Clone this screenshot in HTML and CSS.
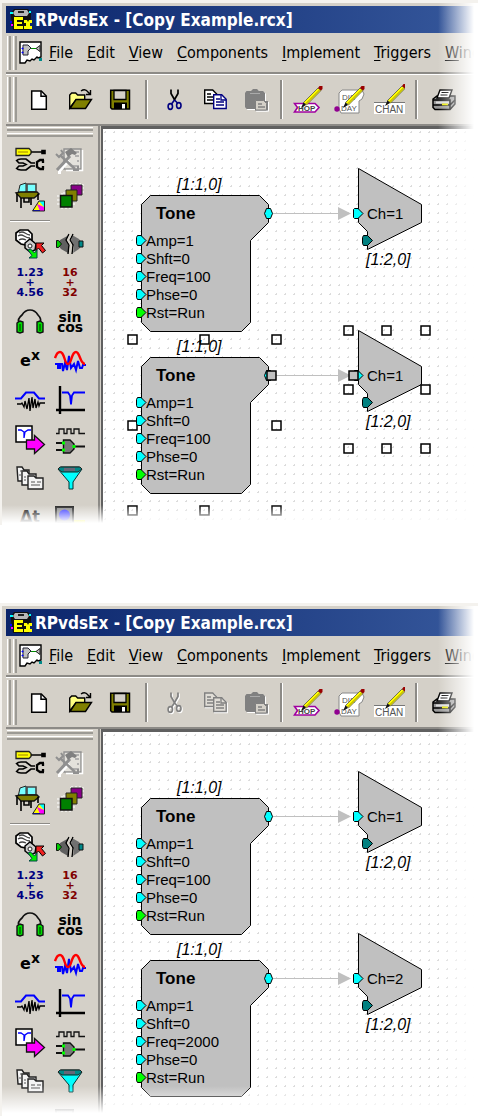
FILE: index.html
```html
<!DOCTYPE html>
<html lang="en">
<head>
    <meta charset="UTF-8">
    <meta name="viewport" content="width=device-width, initial-scale=1.0">
    <title>RPvdsEx - Copy Example</title>
    <link rel="stylesheet" href="styles.css">
</head>
<body>
    <!-- shared icons and circuit parts -->
    <svg class="sprite" aria-hidden="true">
        <symbol id="app" viewBox="0 0 24 24">
            <path d="M5 1h14l3 4v5l-2 12H4L2 9V5z" fill="#111"/>
            <path d="M6 2h12l2 3-2 3H6L4 5z" fill="#b8b8b8"/>
            <path d="M9 3h6v2H9z" fill="#222"/>
            <path d="M1 4h3v2H1zM20 3h2v2h-2z" fill="#0ff"/>
            <path d="M1 13h2v2H1z" fill="#00f"/><path d="M2 16h2v2H2z" fill="#f0f"/>
            <path d="M5 9h9v3H8v2h5v2H8v2h6v3H5zM15 12h3l1 2 1-2h3v3h-2v3h2v3h-8v-3h2v-3h-2z" fill="#ff0"/>
        </symbol>
        <symbol id="doc" viewBox="0 0 24 24">
            <path d="M1 1h21v15l-3 1-1-1-3 3-2-1-2 2-3-1-2 3-5 0z" fill="#fff" stroke="#000" stroke-width="1.4"/>
            <path d="M4 4h5l3 3-3 3v4H4z" fill="#c0c0c0" stroke="#223"/>
            <path d="M12 7.500h5" stroke="#080"/><path d="M21 4.500v6l-4-3z" fill="#c0c0c0" stroke="#222"/>
            <path d="M3 7h1v1H3zM3 11h1v1H3z" stroke="#00f" fill="none"/>
            <path d="M20 17h3v3h-3z" fill="#088"/>
        </symbol>
        <symbol id="new" viewBox="0 0 32 32">
            <path d="M8.700 7h9.600l5 5v13.300H8.700z" fill="#fff" stroke="#000" stroke-width="1.500"/>
            <path d="M18 7v5.300h5" fill="none" stroke="#000" stroke-width="1.500"/>
        </symbol>
        <symbol id="open" viewBox="0 0 32 32">
            <path d="M6.700 24V11l2-2h4l2 2h7v5H13z" fill="#ffff80" stroke="#000" stroke-width="1.400"/>
            <path d="M7 24.500l6-9h15.500l-6 9z" fill="#808000" stroke="#000" stroke-width="1.400"/>
            <path d="M18 7q4-3 7 1l2 2M27.500 6v4.500H23" fill="none" stroke="#000" stroke-width="1.400"/>
        </symbol>
        <symbol id="save" viewBox="0 0 32 32">
            <path d="M7.700 6.200h18.800v18.800H9l-1.300-1.300z" fill="#808000" stroke="#000" stroke-width="1.500"/>
            <path d="M11 6.500h12v9H11z" fill="#d4d0c8" stroke="#000" stroke-width="1.300"/>
            <path d="M11 18.500h13v6.500H11z" fill="#000"/><path d="M19 20h3v4.500h-3z" fill="#fff"/>
        </symbol>
        <symbol id="cut" viewBox="0 0 32 32">
            <path d="M13 5.500v4l4 7M20 5.500v4l-4 7" fill="none" stroke="var(--ink)" stroke-width="1.700"/>
            <g fill="none" stroke="var(--blue)" stroke-width="1.600">
                <path d="M16.500 16l-3 4M16.500 16l3 3"/>
                <ellipse cx="12.300" cy="22.500" rx="2.200" ry="2.900"/><ellipse cx="20.800" cy="21.500" rx="2.200" ry="2.900"/>
            </g>
        </symbol>
        <symbol id="copy" viewBox="0 0 32 32">
            <path d="M6.700 6h8l4 4v9.500h-12z" fill="var(--paper)" stroke="var(--ink)" stroke-width="1.400"/>
            <path d="M9 10h4M9 13h7M9 16h7" stroke="var(--ink)" stroke-width="1.300"/>
            <path d="M15.700 10.700h8l4.500 4.500v9.300H15.700z" fill="var(--paper)" stroke="var(--blue)" stroke-width="1.400"/>
            <path d="M18 15h4M18 18h8M18 21h8M23 11v5h5" fill="none" stroke="var(--blue)" stroke-width="1.300"/>
        </symbol>
        <symbol id="paste" viewBox="0 0 32 32">
            <path d="M7 9l1.500-2H13l2-2h4l2 2h4l2 2v8h3v9.500H17V25H8.500L7 23z" fill="#808080"/>
            <path d="M12 9.500h10" stroke="#aaa"/>
            <path d="M17.500 16.500h8l3 3v6.500h-11z" fill="#d4d0c8" stroke="#808080"/>
            <path d="M20 20h4M20 23h7" stroke="#808080" stroke-width="1.400"/>
        </symbol>
        <symbol id="pencil" viewBox="0 0 32 32">
            <path d="M10.500 18.500L25 4l3 2.500L13.500 21z" fill="#ff0" stroke="#554" stroke-width=".8"/>
            <path d="M12.500 20L26.500 6" stroke="#a09000"/>
            <path d="M25 4l1.500-2h3v3L28 6.500z" fill="#900"/>
            <path d="M8 24l2.500-5.500L13 21z" fill="#111"/>
        </symbol>
        <symbol id="hop" viewBox="0 0 32 32">
            <path d="M1.500 19.500H22l4 4-4 4.500H1.500l3-4.500z" fill="#fff" stroke="#a000a0" stroke-width="1.600"/>
            <text x="5" y="27" font-size="8" font-weight="bold" fill="#444">HOP</text>
            <use href="#pencil"/>
        </symbol>
        <symbol id="disday" viewBox="0 0 32 32">
            <path d="M6 9l3-3h20l2 4-2 5-3 2v12H8l-2-4z" fill="#fff" stroke="#888"/>
            <text x="9" y="16" font-size="8" fill="#555">DIS</text>
            <text x="8" y="27" font-size="8" fill="#555">DAY</text>
            <circle cx="4" cy="25" r="2.700" fill="#900090"/>
            <use href="#pencil" x="2"/>
        </symbol>
        <symbol id="chan" viewBox="0 0 32 32">
            <path d="M1 19h31v11H1z" fill="#fff"/><path d="M1 18.500h31" stroke="#777"/>
            <text x="2" y="28.500" font-size="10" fill="#555">CHAN</text>
            <use href="#pencil" x="4" y="-2"/>
        </symbol>
        <symbol id="print" viewBox="0 0 32 32">
            <path d="M5 15l4-3h18v8l-5 5.500H7l-2-2z" fill="#999" stroke="#000" stroke-width="1.500"/>
            <path d="M9 14l3-8h12l-3 8z" fill="#fff" stroke="#000" stroke-width="1.400"/>
            <path d="M13.500 8.500h7M12.500 11h7" stroke="#000"/>
            <path d="M5 16h17v9M5 21h17l5-5" fill="none" stroke="#000" stroke-width="1.500"/>
            <path d="M8 17.500h13v2H8z" fill="#ddd"/><path d="M14 19.500h6v1.800h-6z" fill="#ee0"/>
        </symbol>

        <symbol id="tools" viewBox="0 0 32 32">
            <path d="M2 5.500h13l2 2v3l-2 2H2z" fill="#ff0" stroke="#222" stroke-width="1.300"/>
            <path d="M4 9h10" stroke="#a08000"/><path d="M17 9h13M28 7.500v3h3v-3z" stroke="#000" stroke-width="1.600" fill="#000"/>
            <path d="M2 18q2-2 5-2h5l5 4h4M2 25q2 2 5 2h5l5-4h4M3 18l2 2h4l3 1.500-3 1.500H5l-2 2" fill="none" stroke="#000" stroke-width="1.700"/>
            <path d="M30 17h-4l-3 2v5l3 2h4M29 17v3M29 26v-3" fill="none" stroke="#000" stroke-width="2.300"/>
        </symbol>
        <symbol id="build" viewBox="0 0 32 32">
            <path d="M10 6h17v20H10z" fill="#e4e2dc" stroke="#909090" stroke-width="1.400"/>
            <path d="M28.500 7v20.500H12" fill="none" stroke="#fff" stroke-width="1.500"/>
            <path d="M19 9h6M21 13h4M19 23h6M23 18h2" stroke="#a0a0a0" stroke-width="1.400"/>
            <path d="M5 28.500l10-11M4 29.500h3" stroke="#fff" stroke-width="3"/>
            <path d="M3 27l13-14" stroke="#909090" stroke-width="3"/>
            <path d="M11 9l6-4 6 5-2 2-3-1-4 3z" fill="#808080"/>
            <path d="M6 12l15 14" stroke="#909090" stroke-width="2.400"/>
            <path d="M2 11l3 3 4-4-2-3M19 27h5v-4" fill="none" stroke="#909090" stroke-width="2"/>
        </symbol>
        <symbol id="desk" viewBox="0 0 32 32">
            <path d="M6 3l6-2v9l-8 2z" fill="#7ff" stroke="#222"/>
            <path d="M13 2h9v8h-9z" fill="#7ff" stroke="#444" stroke-width="1.600"/>
            <path d="M2 11l4-1h17l2 2-5 4H7z" fill="#808000" stroke="#111" stroke-width="1.400"/>
            <path d="M3 12v8M7 16v10M17 16v7M24 12v6M10 16v4h5v-4" stroke="#000" stroke-width="1.600" fill="none"/>
            <path d="M19 28l6-9h5v10H19z" fill="#ff0"/><path d="M25 19h5v6z" fill="#0ff"/>
            <path d="M23 22l7 3v4h-4z" fill="#f0f"/><path d="M19 28h7v1h-7z" fill="#00f"/>
            <path d="M18.500 29l6.500-10h5.500v10z" fill="none" stroke="#222"/>
        </symbol>
        <symbol id="chips" viewBox="0 0 32 32">
            <path d="M16 3h14M16 6h14M16 10h14M18 1v11M22 1v11M26 1v11M9 11h14M9 16h14M3 14h18M3 18h18M3 22h18M8 11v16M12 11v16M16 11v16" stroke="#fff" stroke-width="1.200"/>
            <path d="M17 3h11v10H17z" fill="#808" stroke="#222"/>
            <path d="M12 8h11v11H12z" fill="#808000" stroke="#222"/>
            <path d="M6.500 13.500h11.500v11.500H6.500z" fill="#008000" stroke="#111" stroke-width="1.500"/>
        </symbol>
        <symbol id="jack" viewBox="0 0 32 32">
            <path d="M2 5l4-3h8l4 4v6l-6 5-5-1-5-4z" fill="#fff" stroke="#000" stroke-width="1.700"/>
            <path d="M5 5q3-2 6 0t5 2M4 8q3-2 6 0t6 2M5 12q3-2 7 0" fill="none" stroke="#444" stroke-width="1.300"/>
            <path d="M11 15l5-4 6 5-1 6-5 2-5-4z" fill="#ccc" stroke="#000" stroke-width="1.500"/>
            <circle cx="16" cy="18" r="2" fill="#fff" stroke="#222"/>
            <path d="M22 15h8l-2.500 2.500 4 5-3 2.500-4-5-2.500 2.500z" fill="#f02020" stroke="#000"/>
            <path d="M14 22l2.500-1 4 4L23 22v8h-8l3-2.500z" fill="#0e0" stroke="#044"/>
        </symbol>
        <symbol id="split" viewBox="0 0 32 32">
            <path d="M3 16l3-4 9-5-2 6 2 6-1 6-7-4z" fill="#606060"/>
            <path d="M18 7l7 4 4 5-4 5-6 4 1-6-3-6z" fill="#707070"/>
            <path d="M15 6l-3 6 3 5-1 9M19 6l-3 6 3 5-1 9" fill="none" stroke="#000" stroke-width="1.400"/>
            <path d="M17 6l-3 6 3 5-1 9" fill="none" stroke="#d4d0c8" stroke-width="2"/>
            <path d="M2.500 12.500h2l3 3.500-3 3.500h-2z" fill="#0c0" stroke="#111"/>
            <path d="M25 13h4v6h-4z" fill="#088" stroke="#111"/>
        </symbol>
        <symbol id="phones" viewBox="0 0 32 32">
            <path d="M5 17q-2-4 3-8 3-5 8-5t8 5q4 4 2 8" fill="none" stroke="#111" stroke-width="1.700"/>
            <path d="M3 17l3-2 3 1v10l-3 1-3-1zM29 17l-3-2-3 1v10l3 1 3-1z" fill="#0d0" stroke="#111" stroke-width="1.400"/>
            <path d="M6 18v7M26 18v7" stroke="#060" stroke-width="1.500"/>
        </symbol>
        <symbol id="waves" viewBox="0 0 32 32">
            <path d="M1 19h3v4h2v-4h2l1 7 2-8 2 7 2-14 2 12 3-4 2 6 2-9 2 7h2l1-3h4" fill="none" stroke="#00f" stroke-width="2"/>
            <path d="M1 13q2-6 5-6c5 0 4 12 8 12 4 0 3-12 8-12 4 0 4 12 9 12" fill="none" stroke="#f00" stroke-width="2.400"/>
        </symbol>
        <symbol id="bump" viewBox="0 0 32 32">
            <path d="M1 14.500h6l5-6h8l5 6h6" fill="none" stroke="#00f" stroke-width="2"/>
            <path d="M3 20h4l1-1 2 4 1-6 2 8 2-11 1 13 2-14 1 11 2-9 1 9 2-6 1 4 1-3h5" fill="none" stroke="#000" stroke-width="1.300"/>
        </symbol>
        <symbol id="notch" viewBox="0 0 32 32">
            <path d="M6 2v28M2 26h29" stroke="#000" stroke-width="2.400"/>
            <path d="M8 8.500h6l2 3 1 9 1-9 2-3h11" fill="none" stroke="#00f" stroke-width="1.800"/>
        </symbol>
        <symbol id="export" viewBox="0 0 32 32">
            <path d="M2 3h16v16H2z" fill="#fff" stroke="#000" stroke-width="1.500"/>
            <path d="M4 7h3l3 2v6l1-6 3-2h3" fill="none" stroke="#00f" stroke-width="1.300"/>
            <path d="M12.500 17h8v-4.500l10 9-10 9V26h-8z" fill="#f0f" stroke="#111" stroke-width="1.300"/>
        </symbol>
        <symbol id="gate" viewBox="0 0 32 32">
            <path d="M2 10.500h3V6h5v4.500h3V6h4v4.500h3V6h5v4.500h6" fill="none" stroke="#111" stroke-width="1.300"/>
            <path d="M2 20h8M2 27h8M20 23.500h11" stroke="#111" stroke-width="1.800"/>
            <path d="M9.500 17H16l4 4v5l-4 4H9.500z" fill="#777" stroke="#111" stroke-width="1.400"/>
            <path d="M8 18.500h3v3H8zM8 25.500h3v3H8zM18.500 22h3v3h-3z" fill="#0f0"/>
        </symbol>
        <symbol id="pages" viewBox="0 0 32 32">
            <g fill="#f4f4f4" stroke="#222" stroke-width="1.400">
                <path d="M3 5h5l2 3h5v11H4z"/><path d="M8 9h5l2 3h7v11H8z"/><path d="M14 14h6l2 2h7v11H14z"/>
            </g>
            <path d="M17 20h4M23 20h4M17 23h9M6 9h3M10 15h2M10 18h2M5 13h2" stroke="#555"/>
        </symbol>
        <symbol id="funnel" viewBox="0 0 32 32">
            <path d="M4 7l3-2h18l3 2-9 13v7h-4v-7z" fill="#0ff" stroke="#033"/>
            <path d="M4 7l2-2h20l2 2-4 3H8z" fill="#088" stroke="#222"/>
            <path d="M10 6h11v3H10z" fill="#667"/>
        </symbol>
        <symbol id="blue" viewBox="0 0 32 32">
            <path d="M2 6h17v16H2z" fill="#888" stroke="#222" stroke-width="2"/>
            <circle cx="10.500" cy="14" r="5.500" fill="#33f"/>
            <path d="M20 19h11v8H20z" fill="#ee0"/>
        </symbol>

        <symbol id="tone" overflow="visible">
            <path class="part" d="M9.500.5h109l9 9v18l-18 18v82l-9 9h-91l-9-9V9.500z"/>
            <g class="port">
                <path d="M123.500 18.500l2-5h4l2 5-2 5h-4z"/>
                <path d="M-3.500 40.500H0l5 5-5 5h-3.500l-1-2v-6z"/>
                <path d="M-3.500 58.500H0l5 5-5 5h-3.500l-1-2v-6z"/>
                <path d="M-3.500 76.500H0l5 5-5 5h-3.500l-1-2v-6z"/>
                <path d="M-3.500 94.500H0l5 5-5 5h-3.500l-1-2v-6z"/>
                <path class="run" d="M-3.500 112.500H0l5 5-5 5h-3.500l-1-2v-6z"/>
            </g>
        </symbol>
        <symbol id="out" overflow="visible">
            <path class="wire" d="M-85 45.500h66"/>
            <path class="tip" d="M-20 39v13l13-6.500z"/>
            <path class="part" d="M.5.500l63 36v18l-54 27v-18l-9-9z"/>
            <g class="port">
                <path d="M-4.500 41.500l1-1H0l5 5-5 5h-3.500l-1-1z"/>
                <path class="idle" d="M5.500 67.500h4l5 5-5 5h-4l-1-2v-6z"/>
            </g>
        </symbol>
    </svg>

    <section class="window before">
        <header class="titlebar">
            <svg class="badge"><use href="#app"/></svg>
            <h1>RPvdsEx - [Copy Example.rcx]</h1>
        </header>
        <nav class="menubar">
            <span class="grip"></span>
            <svg class="badge"><use href="#doc"/></svg>
            <button><u>F</u>ile</button>
            <button><u>E</u>dit</button>
            <button><u>V</u>iew</button>
            <button><u>C</u>omponents</button>
            <button><u>I</u>mplement</button>
            <button><u>T</u>riggers</button>
            <button><u>W</u>indow</button>
        </nav>
        <div class="toolbar">
            <span class="grip"></span>
            <button class="tool" aria-label="New"><svg><use href="#new"/></svg></button>
            <button class="tool" aria-label="Open"><svg><use href="#open"/></svg></button>
            <button class="tool" aria-label="Save"><svg><use href="#save"/></svg></button>
            <span class="divider"></span>
            <button class="tool" aria-label="Cut"><svg><use href="#cut"/></svg></button>
            <button class="tool" aria-label="Copy"><svg><use href="#copy"/></svg></button>
            <button class="tool" aria-label="Paste" disabled><svg><use href="#paste"/></svg></button>
            <span class="divider"></span>
            <button class="tool" aria-label="Edit hops"><svg><use href="#hop"/></svg></button>
            <button class="tool" aria-label="Edit display"><svg><use href="#disday"/></svg></button>
            <button class="tool" aria-label="Edit channels"><svg><use href="#chan"/></svg></button>
            <span class="divider"></span>
            <button class="tool" aria-label="Print"><svg><use href="#print"/></svg></button>
        </div>
        <div class="workspace">
            <aside class="toolbox">
                <span class="grip"></span>
                <div class="palette">
                    <button class="tool" aria-label="Setup"><svg><use href="#tools"/></svg></button>
                    <button class="tool" aria-label="Build"><svg><use href="#build"/></svg></button>
                    <button class="tool" aria-label="Desk"><svg><use href="#desk"/></svg></button>
                    <button class="tool" aria-label="Devices"><svg><use href="#chips"/></svg></button>
                    <hr>
                    <button class="tool" aria-label="Input and output"><svg><use href="#jack"/></svg></button>
                    <button class="tool" aria-label="Helpers"><svg><use href="#split"/></svg></button>
                    <button class="tool sum navy">1.23<br>+<br>4.56</button>
                    <button class="tool sum maroon">16<br>+<br>32</button>
                    <button class="tool" aria-label="Audio"><svg><use href="#phones"/></svg></button>
                    <button class="tool trig">sin<br>cos</button>
                    <button class="tool exp">e<sup>x</sup></button>
                    <button class="tool" aria-label="Waveforms"><svg><use href="#waves"/></svg></button>
                    <button class="tool" aria-label="Envelopes"><svg><use href="#bump"/></svg></button>
                    <button class="tool" aria-label="Filters"><svg><use href="#notch"/></svg></button>
                    <button class="tool" aria-label="Export"><svg><use href="#export"/></svg></button>
                    <button class="tool" aria-label="Logic"><svg><use href="#gate"/></svg></button>
                    <button class="tool" aria-label="Buffers"><svg><use href="#pages"/></svg></button>
                    <button class="tool" aria-label="Reduce"><svg><use href="#funnel"/></svg></button>
                    <button class="tool delay">&Delta;t</button>
                    <button class="tool" aria-label="Devices status"><svg><use href="#blue"/></svg></button>
                </div>
            </aside>
            <main class="canvas">
                <svg class="circuit">
                    <g transform="translate(38 66)">
                        <use href="#tone"/>
                        <text class="label" x="36" y="-5">[1:1,0]</text>
                        <text class="name" x="15" y="24">Tone</text>
                        <text x="5" y="51">Amp=1</text>
                        <text x="5" y="69">Shft=0</text>
                        <text x="5" y="87">Freq=100</text>
                        <text x="5" y="105">Phse=0</text>
                        <text x="5" y="123">Rst=Run</text>
                    </g>
                    <g transform="translate(255 39)">
                        <use href="#out"/>
                        <text x="9" y="51">Ch=1</text>
                        <text class="label" x="8" y="97">[1:2,0]</text>
                    </g>
                    <g class="handles">
                        <path d="M25 206h9v9h-9zM97 206h9v9h-9zM169 206h9v9h-9zM25 292h9v9h-9zM169 292h9v9h-9zM25 377h9v9h-9zM97 377h9v9h-9zM169 377h9v9h-9z"/>
                    </g>
                    <g transform="translate(38 228)">
                        <use href="#tone"/>
                        <text class="label" x="36" y="-5">[1:1,0]</text>
                        <text class="name" x="15" y="24">Tone</text>
                        <text x="5" y="51">Amp=1</text>
                        <text x="5" y="69">Shft=0</text>
                        <text x="5" y="87">Freq=100</text>
                        <text x="5" y="105">Phse=0</text>
                        <text x="5" y="123">Rst=Run</text>
                    </g>
                    <g transform="translate(255 201)">
                        <use href="#out"/>
                        <text x="9" y="51">Ch=1</text>
                        <text class="label" x="8" y="97">[1:2,0]</text>
                    </g>
                    <g class="handles">
                        <path d="M241 197h9v9h-9zM279 197h9v9h-9zM318 197h9v9h-9zM241 256h9v9h-9zM318 256h9v9h-9zM241 315h9v9h-9zM279 315h9v9h-9zM318 315h9v9h-9z"/>
                        <path class="joint" d="M164 242h9v9h-9zM246 242h9v9h-9z"/>
                    </g>
                </svg>
            </main>
        </div>
    </section>

    <section class="window after">
        <header class="titlebar">
            <svg class="badge"><use href="#app"/></svg>
            <h1>RPvdsEx - [Copy Example.rcx]</h1>
        </header>
        <nav class="menubar">
            <span class="grip"></span>
            <svg class="badge"><use href="#doc"/></svg>
            <button><u>F</u>ile</button>
            <button><u>E</u>dit</button>
            <button><u>V</u>iew</button>
            <button><u>C</u>omponents</button>
            <button><u>I</u>mplement</button>
            <button><u>T</u>riggers</button>
            <button><u>W</u>indow</button>
        </nav>
        <div class="toolbar">
            <span class="grip"></span>
            <button class="tool" aria-label="New"><svg><use href="#new"/></svg></button>
            <button class="tool" aria-label="Open"><svg><use href="#open"/></svg></button>
            <button class="tool" aria-label="Save"><svg><use href="#save"/></svg></button>
            <span class="divider"></span>
            <button class="tool" aria-label="Cut" disabled><svg><use href="#cut"/></svg></button>
            <button class="tool" aria-label="Copy" disabled><svg><use href="#copy"/></svg></button>
            <button class="tool" aria-label="Paste" disabled><svg><use href="#paste"/></svg></button>
            <span class="divider"></span>
            <button class="tool" aria-label="Edit hops"><svg><use href="#hop"/></svg></button>
            <button class="tool" aria-label="Edit display"><svg><use href="#disday"/></svg></button>
            <button class="tool" aria-label="Edit channels"><svg><use href="#chan"/></svg></button>
            <span class="divider"></span>
            <button class="tool" aria-label="Print"><svg><use href="#print"/></svg></button>
        </div>
        <div class="workspace">
            <aside class="toolbox">
                <span class="grip"></span>
                <div class="palette">
                    <button class="tool" aria-label="Setup"><svg><use href="#tools"/></svg></button>
                    <button class="tool" aria-label="Build"><svg><use href="#build"/></svg></button>
                    <button class="tool" aria-label="Desk"><svg><use href="#desk"/></svg></button>
                    <button class="tool" aria-label="Devices"><svg><use href="#chips"/></svg></button>
                    <hr>
                    <button class="tool" aria-label="Input and output"><svg><use href="#jack"/></svg></button>
                    <button class="tool" aria-label="Helpers"><svg><use href="#split"/></svg></button>
                    <button class="tool sum navy">1.23<br>+<br>4.56</button>
                    <button class="tool sum maroon">16<br>+<br>32</button>
                    <button class="tool" aria-label="Audio"><svg><use href="#phones"/></svg></button>
                    <button class="tool trig">sin<br>cos</button>
                    <button class="tool exp">e<sup>x</sup></button>
                    <button class="tool" aria-label="Waveforms"><svg><use href="#waves"/></svg></button>
                    <button class="tool" aria-label="Envelopes"><svg><use href="#bump"/></svg></button>
                    <button class="tool" aria-label="Filters"><svg><use href="#notch"/></svg></button>
                    <button class="tool" aria-label="Export"><svg><use href="#export"/></svg></button>
                    <button class="tool" aria-label="Logic"><svg><use href="#gate"/></svg></button>
                    <button class="tool" aria-label="Buffers"><svg><use href="#pages"/></svg></button>
                    <button class="tool" aria-label="Reduce"><svg><use href="#funnel"/></svg></button>
                    <button class="tool delay">&Delta;t</button>
                    <button class="tool" aria-label="Devices status"><svg><use href="#blue"/></svg></button>
                </div>
            </aside>
            <main class="canvas">
                <svg class="circuit">
                    <g transform="translate(38 66)">
                        <use href="#tone"/>
                        <text class="label" x="36" y="-5">[1:1,0]</text>
                        <text class="name" x="15" y="24">Tone</text>
                        <text x="5" y="51">Amp=1</text>
                        <text x="5" y="69">Shft=0</text>
                        <text x="5" y="87">Freq=100</text>
                        <text x="5" y="105">Phse=0</text>
                        <text x="5" y="123">Rst=Run</text>
                    </g>
                    <g transform="translate(255 39)">
                        <use href="#out"/>
                        <text x="9" y="51">Ch=1</text>
                        <text class="label" x="8" y="97">[1:2,0]</text>
                    </g>
                    <g transform="translate(38 228)">
                        <use href="#tone"/>
                        <text class="label" x="36" y="-5">[1:1,0]</text>
                        <text class="name" x="15" y="24">Tone</text>
                        <text x="5" y="51">Amp=1</text>
                        <text x="5" y="69">Shft=0</text>
                        <text x="5" y="87">Freq=2000</text>
                        <text x="5" y="105">Phse=0</text>
                        <text x="5" y="123">Rst=Run</text>
                    </g>
                    <g transform="translate(255 201)">
                        <use href="#out"/>
                        <text x="9" y="51">Ch=2</text>
                        <text class="label" x="8" y="97">[1:2,0]</text>
                    </g>
                </svg>
            </main>
        </div>
    </section>
</body>
</html>
```
FILE: styles.css
```css
* {
    box-sizing: border-box;
}
body {
    margin: 0;
    background: #fff;
    font-family: "DejaVu Sans Condensed", "DejaVu Sans", sans-serif;
}
.sprite {
    display: none;
}
button {
    margin: 0;
    padding: 0;
    border: none;
    background: none;
    font: inherit;
    color: #000;
}

/* window frame, fading out to the right and at the bottom */
.window {
    position: relative;
    overflow: hidden;
    padding: 3px 0 0 4px;
    border-top: 3px solid #f4f2ee;
    border-left: 2px solid #f4f2ee;
    background: #d4d0c8;
}
.window::before,
.window::after {
    content: "";
    position: absolute;
    z-index: 1;
    right: 0;
    bottom: 0;
    pointer-events: none;
}
.window::before {
    top: -3px;
    width: 40px;
    background: linear-gradient(to right, transparent, #fff 90%);
}
.window::after {
    left: -2px;
    height: 30px;
    background: linear-gradient(transparent, #fff 90%);
}
.before::after {
    height: 20px;
}
.before {
    margin-bottom: 78px;
}
.before .workspace {
    height: 399px;
}
.after .workspace {
    height: 387px;
}

.titlebar {
    display: flex;
    align-items: center;
    gap: 2px;
    height: 27px;
    padding-left: 3px;
    background: linear-gradient(to right, #0a246a, #36589c);
}
.titlebar h1 {
    margin: 0;
    font-size: 17px;
    line-height: 24px;
    color: #fff;
    white-space: nowrap;
}
.badge {
    flex: none;
    width: 24px;
    height: 24px;
}

.menubar,
.toolbar {
    display: flex;
    align-items: center;
    overflow: hidden;
    border-bottom: 2px solid #8c8a86;
}
.menubar {
    height: 41px;
    padding: 3px 0 2px 1px;
    font-size: 16px;
    line-height: 20px;
}
.menubar button {
    flex: none;
    margin-right: 14px;
}
.menubar .badge {
    margin: 0 6px 0 2px;
}
.menubar u {
    text-underline-offset: 2px;
}
.toolbar {
    height: 52px;
    padding: 2px 0 2px 1px;
    border-top: 1px solid #fff;
}
.grip {
    flex: none;
    width: 10px;
    align-self: stretch;
    background: repeating-linear-gradient(to right, #fff 0 1px, #d4d0c8 1px 2px, #9c9a94 2px 4px, #d4d0c8 4px 6px);
}
.toolbar .grip {
    margin-right: 2px;
}
.divider {
    flex: none;
    width: 15px;
    height: 39px;
    background: linear-gradient(to right, transparent 6px, #8c8a86 6px, #8c8a86 8px, #fff 8px, #fff 9px, transparent 9px);
}

.tool {
    --ink: #000;
    --blue: #000080;
    --paper: #fff;
    flex: none;
    width: 40px;
    height: 39px;
    text-align: center;
}
.tool svg {
    display: block;
    width: 32px;
    height: 32px;
    margin: 0 auto;
    font-family: "Liberation Sans", Arial, sans-serif;
}
.tool:disabled {
    --ink: #808080;
    --blue: #808080;
    --paper: #e0ddd6;
    filter: drop-shadow(1px 1px 0 #fff);
}

.workspace {
    display: flex;
    overflow: hidden;
}
.toolbox {
    flex: none;
    width: 94px;
    padding: 1px 5px 0 1px;
    border-right: 2px solid #8c8a86;
}
.toolbox .grip {
    display: block;
    width: auto;
    height: 10px;
    background: repeating-linear-gradient(#fff 0 1px, #d4d0c8 1px 2px, #9c9a94 2px 4px, #d4d0c8 4px 6px);
}
.palette {
    display: grid;
    grid-template-columns: 40px 40px;
    padding: 2px 0 0 3px;
}
.palette hr {
    grid-column: 1 / -1;
    width: 40px;
    height: 2px;
    margin: 3px 0 2px;
    border: none;
    border-top: 1px solid #8c8a86;
    background: #fff;
}
.sum,
.trig,
.exp,
.delay {
    font-family: "DejaVu Sans", Verdana, sans-serif;
    font-weight: bold;
    white-space: nowrap;
}
.sum {
    font-size: 11px;
    line-height: 10px;
}
.navy {
    color: #000080;
}
.maroon {
    color: #800000;
}
.trig {
    font-size: 14px;
    line-height: 10px;
}
.exp {
    font-size: 16px;
    line-height: 20px;
}
.exp sup {
    font-size: 14px;
    line-height: 10px;
}
.delay {
    font-size: 16px;
    line-height: 20px;
}

.canvas {
    flex: 1;
    min-width: 0;
    margin-left: 1px;
    border: solid #606060;
    border-width: 3px 0 0 2px;
    background: #fff radial-gradient(circle, #dcdcdc 1px, transparent 1px) -2px -1px / 9px 9px;
}
.circuit {
    display: block;
    width: 100%;
    height: 100%;
    font-family: "Liberation Sans", Arial, sans-serif;
    font-size: 15px;
}
.name {
    font-size: 17px;
    font-weight: bold;
}
.label {
    font-size: 16px;
    font-style: italic;
}
.part {
    fill: #c0c0c0;
    stroke: #000;
}
.wire {
    stroke: #c0c0c0;
}
.tip {
    fill: #c0c0c0;
}
.port {
    fill: #0ff;
    stroke: #000;
}
.port .run {
    fill: #0f0;
}
.port .idle {
    fill: #008080;
}
.handles {
    fill: none;
    stroke: #000;
    stroke-width: 1.5px;
}
.handles .joint {
    fill: #c0c0c0;
}
```
